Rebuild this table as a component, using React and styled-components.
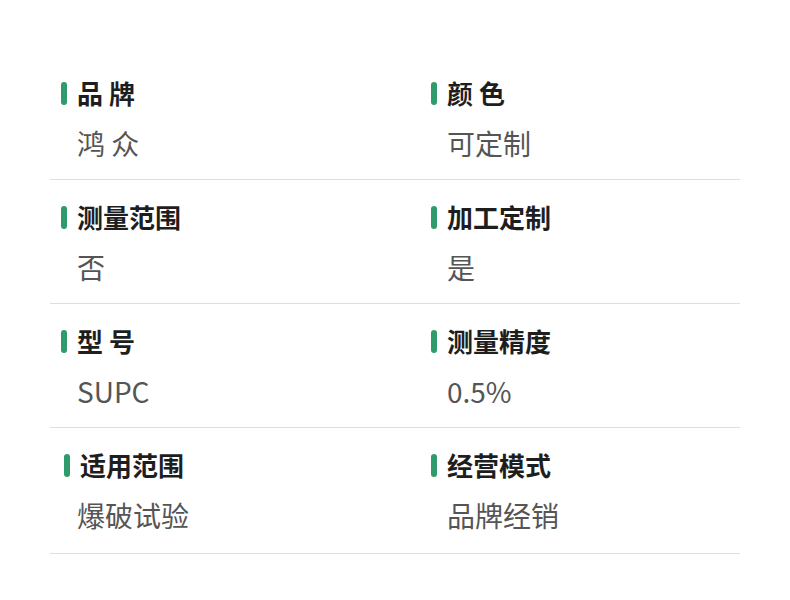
import React from "react";
import styled, { createGlobalStyle } from "styled-components";

const Global = createGlobalStyle`
  html, body { margin: 0; padding: 0; background: #fff; }
  body { font-family: "Noto Sans CJK SC", "Noto Sans", sans-serif; }
`;

const Page = styled.div`
  width: 790px;
  padding: 56px 50px 0 50px;
  box-sizing: border-box;
`;

const Row = styled.div`
  display: grid;
  grid-template-columns: 370px 1fr;
  height: ${(p) => p.$height || 124}px;
  box-sizing: border-box;
  border-bottom: 1px solid #c9e8df;
  padding-top: 24px;
  padding-left: 11px;
`;

const Cell = styled.div`
  display: flex;
  flex-direction: column;
  gap: 18px;
`;

const Label = styled.div`
  display: flex;
  align-items: center;
  gap: 10px;
  padding-left: ${(p) => p.$shift || 0}px;
  font-size: 26px;
  font-weight: 700;
  color: #1e1e1e;
  line-height: 26px;
  height: 26px;
`;

const Bar = styled.span`
  width: 6px;
  height: 23px;
  border-radius: 3px;
  background: #2f9a6b;
  flex: none;
`;

const Value = styled.div`
  padding-left: 16px;
  font-size: 28px;
  color: #555;
  line-height: 38px;
  font-weight: 400;
`;

const rows = [
  [["品 牌", "鸿 众"], ["颜 色", "可定制"]],
  [["测量范围", "否"], ["加工定制", "是"]],
  [["型 号", "SUPC"], ["测量精度", "0.5%"]],
  [["适用范围", "爆破试验"], ["经营模式", "品牌经销"]],
];

export default function App() {
  return (
    <>
      <Global />
      <Page>
        {rows.map((r, i) => (
          <Row key={i} $height={i === 3 ? 126 : 124}>
            {r.map(([l, v], j) => (
              <Cell key={j}>
                <Label $shift={i === 3 && j === 0 ? 3 : 0}>
                  <Bar />
                  {l}
                </Label>
                <Value>{v}</Value>
              </Cell>
            ))}
          </Row>
        ))}
      </Page>
    </>
  );
}
